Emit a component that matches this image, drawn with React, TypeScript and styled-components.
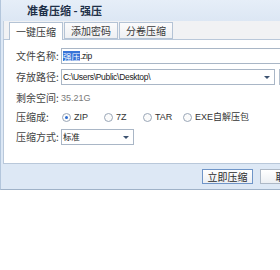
import React from 'react';
import styled, { createGlobalStyle } from 'styled-components';

const Global = createGlobalStyle`
    html, body {
        margin: 0;
        background: #ffffff;
        overflow: hidden;
    }
    * { box-sizing: border-box; }
`;

const Window = styled.div`
    width: 330px;
    height: 190px;
    background: #dde8f5;
    border-left: 1px solid #b3c6dc;
    border-bottom: 1px solid #9fb2c8;
    display: flex;
    flex-direction: column;
    font-family: "Noto Sans CJK SC", "Liberation Sans", sans-serif;
    font-size: 10px;
    line-height: 1;
    white-space: nowrap;
    color: #333;
    box-shadow: 0 6px 10px rgba(190, 205, 225, 0.25);
`;

const TitleBar = styled.div`
    height: 21px;
    padding-left: 26px;
    display: flex;
    align-items: center;
    font-weight: bold;
    font-size: 11px;
    color: #1e3048;
    background: linear-gradient(#e6eef8, #dce7f4);
`;

const Client = styled.div`
    margin-left: 2px;
    flex: 1;
    display: flex;
    flex-direction: column;
`;

const TabStrip = styled.div`
    height: 18px;
    background: #f1f2f4;
    border-left: 1px solid #c4d0de;
    padding-left: 5px;
    display: flex;
    align-items: flex-end;
`;

const Tab = styled.div<{ $active?: boolean }>`
    width: 54px;
    height: ${p => (p.$active ? '18px' : '17px')};
    margin-bottom: ${p => (p.$active ? '-1px' : '0')};
    margin-right: 1px;
    display: flex;
    align-items: center;
    justify-content: center;
    background: ${p => (p.$active ? '#ffffff' : 'linear-gradient(#fbfbfc, #eef0f3)')};
    border: 1px solid #b4c3d5;
    border-bottom: ${p => (p.$active ? 'none' : '1px solid #b4c3d5')};
    color: #3a3a3a;
    position: relative;
    z-index: 1;
`;

const Panel = styled.div`
    height: 125px;
    background: #ffffff;
    border: 1px solid #b9c8da;
    padding: 8px 0 0 12px;
    display: flex;
    flex-direction: column;
`;

const Row = styled.div<{ $gap?: number }>`
    height: 16px;
    margin-bottom: ${p => p.$gap ?? 4}px;
    display: flex;
    align-items: center;
`;

const Label = styled.span`
    width: 45px;
    flex: none;
    color: #444;
`;

const Input = styled.div<{ $width: number }>`
    width: ${p => p.$width}px;
    height: 16px;
    flex: none;
    border: 1px solid #a9b6c6;
    display: flex;
    align-items: center;
    padding-left: 1px;
    font-family: "Liberation Sans", "Noto Sans CJK SC", sans-serif;
    font-size: 8.5px;
    letter-spacing: -0.3px;
    color: #222;
    background: #fff;
`;

const Selected = styled.span`
    font-family: "Noto Sans CJK SC", sans-serif;
    letter-spacing: 0;
    background: #3874d8;
    color: #fff;
    padding: 1px 0;
`;

const ArrowBox = styled.span`
    margin-left: auto;
    width: 14px;
    display: flex;
    justify-content: center;
`;

const Arrow = styled.span`
    width: 0;
    height: 0;
    border-left: 3px solid transparent;
    border-right: 3px solid transparent;
    border-top: 3px solid #3c5270;
`;

const BrowseButton = styled.div`
    width: 30px;
    height: 16px;
    flex: none;
    margin-left: 4px;
    border: 1px solid #b3bfcd;
    background: linear-gradient(#fafafa, #e8ebef);
`;

const Free = styled.span`
    font-family: "Liberation Sans", sans-serif;
    font-size: 9px;
    color: #7a7a7a;
`;

const Radio = styled.label`
    display: flex;
    align-items: center;
    font-family: "Liberation Sans", "Noto Sans CJK SC", sans-serif;
    font-size: 9px;
    color: #333;
`;

const RadioCircle = styled.span<{ $checked?: boolean }>`
    width: 9px;
    height: 9px;
    flex: none;
    border-radius: 50%;
    border: 1px solid #9aa7b7;
    background: #fbfbfb;
    margin-right: 3px;
    display: flex;
    align-items: center;
    justify-content: center;
    &::after {
        content: '';
        width: 3px;
        height: 3px;
        border-radius: 50%;
        background: ${p => (p.$checked ? '#2a6ad0' : 'transparent')};
    }
`;

const RadioGroup = styled.div`
    display: grid;
    grid-template-columns: 42px 39px 40px auto;
    margin-left: 1px;
`;

const Footer = styled.div`
    flex: 1;
    display: flex;
    align-items: center;
    padding-left: 199px;
    gap: 7px;
`;

const Button = styled.div<{ $default?: boolean }>`
    width: 51px;
    height: 15px;
    flex: none;
    display: flex;
    align-items: center;
    justify-content: center;
    border: 1px solid ${p => (p.$default ? '#6f95c8' : '#adb8c6')};
    background: linear-gradient(#ffffff, #eceff3);
    color: #2a2a2a;
`;

const App = () => {
    return (
        <>
            <Global />
            <Window>
                <TitleBar>准备压缩 - 强压</TitleBar>
                <Client>
                    <TabStrip>
                        <Tab $active>一键压缩</Tab>
                        <Tab>添加密码</Tab>
                        <Tab>分卷压缩</Tab>
                    </TabStrip>
                    <Panel>
                        <Row $gap={5}>
                            <Label>文件名称:</Label>
                            <Input $width={260}>
                                <Selected>强压</Selected>.zip
                            </Input>
                        </Row>
                        <Row $gap={5}>
                            <Label>存放路径:</Label>
                            <Input $width={214}>
                                C:\Users\Public\Desktop\
                                <ArrowBox><Arrow /></ArrowBox>
                            </Input>
                            <BrowseButton />
                        </Row>
                        <Row $gap={3}>
                            <Label>剩余空间:</Label>
                            <Free>35.21G</Free>
                        </Row>
                        <Row $gap={4}>
                            <Label>压缩成:</Label>
                            <RadioGroup>
                                <Radio><RadioCircle $checked />ZIP</Radio>
                                <Radio><RadioCircle />7Z</Radio>
                                <Radio><RadioCircle />TAR</Radio>
                                <Radio><RadioCircle />EXE自解压包</Radio>
                            </RadioGroup>
                        </Row>
                        <Row>
                            <Label>压缩方式:</Label>
                            <Input $width={73}>
                                标准
                                <ArrowBox><Arrow /></ArrowBox>
                            </Input>
                        </Row>
                    </Panel>
                    <Footer>
                        <Button $default>立即压缩</Button>
                        <Button>取消</Button>
                    </Footer>
                </Client>
            </Window>
        </>
    );
};

export default App;
